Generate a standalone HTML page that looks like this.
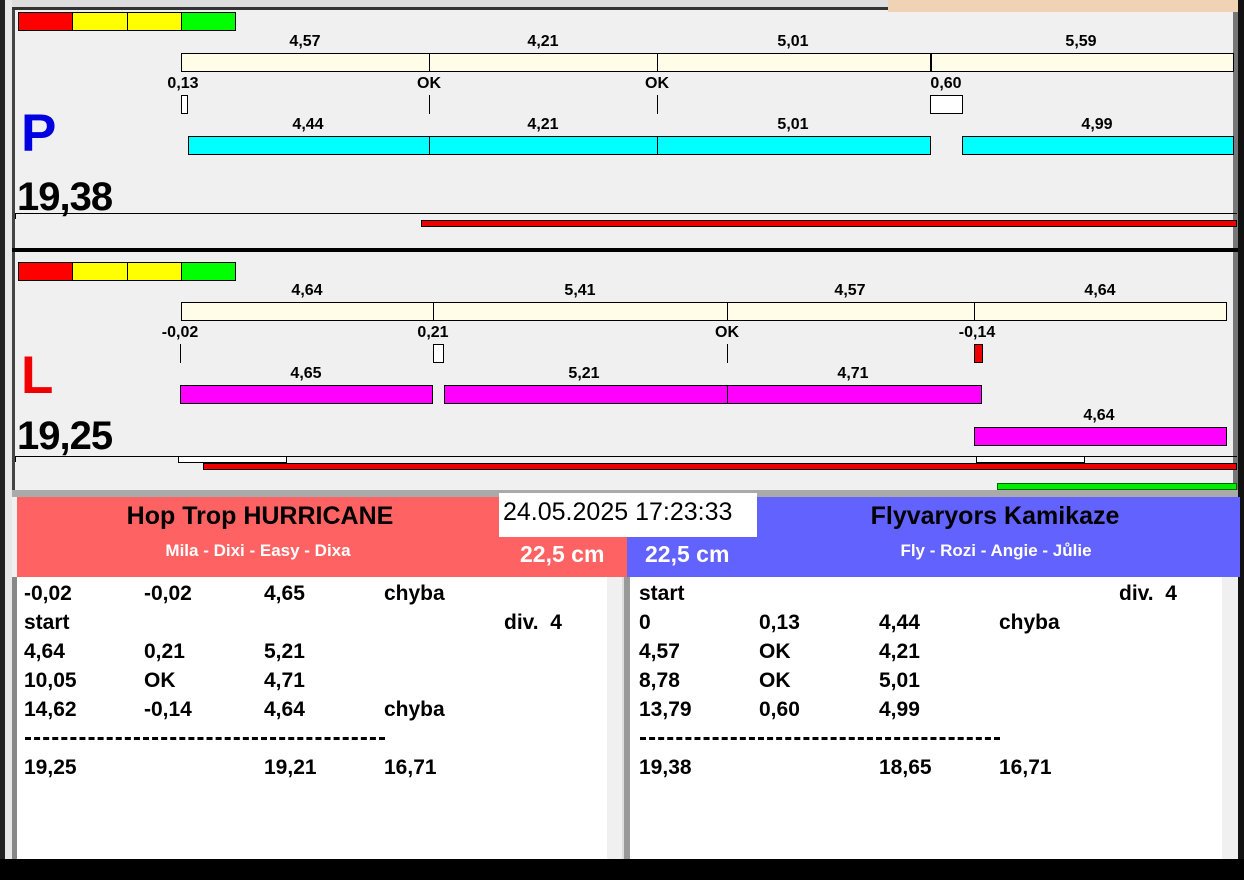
<!DOCTYPE html><html><head><meta charset="utf-8"><style>
*{margin:0;padding:0;box-sizing:border-box}
body{width:1244px;height:880px;position:relative;background:#f0f0f0;font-family:"Liberation Sans",Arial,sans-serif;overflow:hidden}
div{position:absolute}
.b{border:1px solid #000}
.t{font-weight:bold;font-size:16px;transform:translateX(-50%);white-space:nowrap;line-height:18px}
.vl{width:1px;background:#000}
.r{font-weight:bold;font-size:21px;line-height:24px;white-space:nowrap}
</style></head><body>
<div style="left:0;top:0;width:5px;height:880px;background:#222"></div>
<div style="left:5px;top:0;width:7px;height:860px;background:#e8e8e8"></div>
<div style="left:12px;top:0;width:876px;height:10px;background:#ddd;border-bottom:3px solid #333"></div>
<div style="left:888px;top:0;width:352px;height:12px;background:#f0d2b4"></div>
<div style="left:12px;top:10px;width:3px;height:480px;background:#444"></div>
<div style="left:1238px;top:0;width:6px;height:880px;background:#111"></div>
<div style="left:1233px;top:12px;width:5px;height:478px;background:#777"></div>

<!-- panel P -->
<div class="b" style="left:18px;top:12px;width:55px;height:19px;background:#f00"></div>
<div class="b" style="left:72px;top:12px;width:56px;height:19px;background:#ff0"></div>
<div class="b" style="left:127px;top:12px;width:55px;height:19px;background:#ff0"></div>
<div class="b" style="left:181px;top:12px;width:55px;height:19px;background:#0f0"></div>
<div class="t" style="left:305px;top:33px">4,57</div><div class="t" style="left:543px;top:33px">4,21</div><div class="t" style="left:793px;top:33px">5,01</div><div class="t" style="left:1081px;top:33px">5,59</div>
<div class="b" style="left:181px;top:53px;width:1053px;height:19px;background:#fffde8"></div>
<div class="vl" style="left:429px;top:53px;height:19px"></div><div class="vl" style="left:657px;top:53px;height:19px"></div><div class="vl" style="left:930px;top:53px;height:19px;width:2px"></div>
<div class="t" style="left:183px;top:75px">0,13</div><div class="t" style="left:429px;top:75px">OK</div><div class="t" style="left:657px;top:75px">OK</div><div class="t" style="left:946px;top:75px">0,60</div>
<div class="b" style="left:181px;top:95px;width:7px;height:19px;background:#fff"></div>
<div class="vl" style="left:429px;top:95px;height:19px"></div><div class="vl" style="left:657px;top:95px;height:19px"></div>
<div class="b" style="left:930px;top:95px;width:33px;height:19px;background:#fff"></div>
<div class="t" style="left:308px;top:116px">4,44</div><div class="t" style="left:543px;top:116px">4,21</div><div class="t" style="left:793px;top:116px">5,01</div><div class="t" style="left:1097px;top:116px">4,99</div>
<div class="b" style="left:188px;top:136px;width:743px;height:19px;background:#0ff"></div>
<div class="vl" style="left:429px;top:136px;height:19px"></div><div class="vl" style="left:657px;top:136px;height:19px"></div>
<div class="b" style="left:962px;top:136px;width:272px;height:19px;background:#0ff"></div>
<div style="left:21px;top:103px;font-size:53px;font-weight:bold;color:#0000e0;line-height:62px">P</div>
<div style="left:17px;top:173px;font-size:40px;font-weight:bold;line-height:48px;letter-spacing:-1px">19,38</div>
<div style="left:15px;top:213px;width:1222px;height:1px;background:#000"></div>
<div style="left:15px;top:213px;width:1px;height:6px;background:#000"></div>
<div class="b" style="left:421px;top:220px;width:816px;height:7px;background:#e00"></div>
<div style="left:12px;top:248px;width:1226px;height:4px;background:#000"></div>

<!-- panel L -->
<div class="b" style="left:18px;top:262px;width:55px;height:19px;background:#f00"></div>
<div class="b" style="left:72px;top:262px;width:56px;height:19px;background:#ff0"></div>
<div class="b" style="left:127px;top:262px;width:55px;height:19px;background:#ff0"></div>
<div class="b" style="left:181px;top:262px;width:55px;height:19px;background:#0f0"></div>
<div class="t" style="left:307px;top:282px">4,64</div><div class="t" style="left:580px;top:282px">5,41</div><div class="t" style="left:850px;top:282px">4,57</div><div class="t" style="left:1100px;top:282px">4,64</div>
<div class="b" style="left:181px;top:302px;width:1046px;height:19px;background:#fffde8"></div>
<div class="vl" style="left:433px;top:302px;height:19px"></div><div class="vl" style="left:727px;top:302px;height:19px"></div><div class="vl" style="left:974px;top:302px;height:19px"></div>
<div class="t" style="left:180px;top:324px">-0,02</div><div class="t" style="left:433px;top:324px">0,21</div><div class="t" style="left:727px;top:324px">OK</div><div class="t" style="left:977px;top:324px">-0,14</div>
<div class="vl" style="left:180px;top:344px;height:19px"></div>
<div class="b" style="left:433px;top:344px;width:11px;height:19px;background:#fff"></div>
<div class="vl" style="left:727px;top:344px;height:19px"></div>
<div class="b" style="left:974px;top:344px;width:9px;height:19px;background:#e00"></div>
<div class="t" style="left:306px;top:365px">4,65</div><div class="t" style="left:584px;top:365px">5,21</div><div class="t" style="left:853px;top:365px">4,71</div>
<div class="b" style="left:180px;top:385px;width:253px;height:19px;background:#f0f"></div>
<div class="b" style="left:444px;top:385px;width:284px;height:19px;background:#f0f"></div>
<div class="b" style="left:727px;top:385px;width:255px;height:19px;background:#f0f"></div>
<div class="t" style="left:1099px;top:407px">4,64</div>
<div class="b" style="left:974px;top:427px;width:253px;height:19px;background:#f0f"></div>
<div style="left:21px;top:345px;font-size:53px;font-weight:bold;color:#f00000;line-height:62px">L</div>
<div style="left:17px;top:412px;font-size:40px;font-weight:bold;line-height:48px;letter-spacing:-1px">19,25</div>
<div style="left:15px;top:456px;width:1222px;height:1px;background:#000"></div>
<div style="left:15px;top:456px;width:1px;height:6px;background:#000"></div>
<div class="b" style="left:178px;top:456px;width:109px;height:7px;background:#fff"></div>
<div class="b" style="left:976px;top:456px;width:109px;height:7px;background:#fff"></div>
<div class="b" style="left:203px;top:463px;width:1034px;height:7px;background:#e00"></div>
<div style="left:997px;top:483px;width:240px;height:7px;background:#0e0;border:1px solid #060"></div>
<div style="left:12px;top:490px;width:1226px;height:7px;background:#aaa"></div>

<!-- headers -->
<div style="left:17px;top:497px;width:610px;height:80px;background:#ff6262"></div>
<div style="left:627px;top:497px;width:613px;height:80px;background:#6262ff"></div>
<div style="left:260px;top:502px;transform:translateX(-50%);font-size:25px;font-weight:bold;white-space:nowrap">Hop Trop HURRICANE</div>
<div style="left:258px;top:541px;transform:translateX(-50%);font-size:17px;font-weight:bold;color:#fff;white-space:nowrap">Mila - Dixi - Easy - Dixa</div>
<div style="left:520px;top:541px;font-size:23px;font-weight:bold;color:#fff">22,5 cm</div>
<div style="left:499px;top:493px;width:258px;height:44px;background:#fff;font-size:25px;padding:5px 0 0 4px;white-space:nowrap">24.05.2025 17:23:33</div>
<div style="left:645px;top:541px;font-size:23px;font-weight:bold;color:#fff">22,5 cm</div>
<div style="left:995px;top:502px;transform:translateX(-50%);font-size:25px;font-weight:bold;white-space:nowrap">Flyvaryors Kamikaze</div>
<div style="left:996px;top:541px;transform:translateX(-50%);font-size:17px;font-weight:bold;color:#fff;white-space:nowrap">Fly - Rozi - Angie - Jůlie</div>

<!-- lists -->
<div style="left:12px;top:577px;width:5px;height:282px;background:#888"></div>
<div style="left:17px;top:577px;width:590px;height:282px;background:#fff"></div>
<div style="left:607px;top:577px;width:15px;height:282px;background:#f0f0f0"></div>
<div style="left:622px;top:577px;width:8px;height:282px;background:#999;border-left:2px solid #ddd"></div>
<div style="left:630px;top:577px;width:592px;height:282px;background:#fff"></div>
<div style="left:1222px;top:577px;width:16px;height:282px;background:#f0f0f0"></div>
<div style="left:0;top:859px;width:1244px;height:21px;background:#000"></div>

<div class="r" style="left:24px;top:582px">-0,02</div><div class="r" style="left:144px;top:582px">-0,02</div><div class="r" style="left:264px;top:582px">4,65</div><div class="r" style="left:384px;top:582px">chyba</div>
<div class="r" style="left:24px;top:611px">start</div><div class="r" style="left:504px;top:611px">div.&nbsp; 4</div>
<div class="r" style="left:24px;top:640px">4,64</div><div class="r" style="left:144px;top:640px">0,21</div><div class="r" style="left:264px;top:640px">5,21</div>
<div class="r" style="left:24px;top:669px">10,05</div><div class="r" style="left:144px;top:669px">OK</div><div class="r" style="left:264px;top:669px">4,71</div>
<div class="r" style="left:24px;top:698px">14,62</div><div class="r" style="left:144px;top:698px">-0,14</div><div class="r" style="left:264px;top:698px">4,64</div><div class="r" style="left:384px;top:698px">chyba</div>
<div style="left:25px;top:737px;width:360px;border-top:3px dashed #000"></div>
<div class="r" style="left:24px;top:756px">19,25</div><div class="r" style="left:264px;top:756px">19,21</div><div class="r" style="left:384px;top:756px">16,71</div>

<div class="r" style="left:639px;top:582px">start</div><div class="r" style="left:1119px;top:582px">div.&nbsp; 4</div>
<div class="r" style="left:639px;top:611px">0</div><div class="r" style="left:759px;top:611px">0,13</div><div class="r" style="left:879px;top:611px">4,44</div><div class="r" style="left:999px;top:611px">chyba</div>
<div class="r" style="left:639px;top:640px">4,57</div><div class="r" style="left:759px;top:640px">OK</div><div class="r" style="left:879px;top:640px">4,21</div>
<div class="r" style="left:639px;top:669px">8,78</div><div class="r" style="left:759px;top:669px">OK</div><div class="r" style="left:879px;top:669px">5,01</div>
<div class="r" style="left:639px;top:698px">13,79</div><div class="r" style="left:759px;top:698px">0,60</div><div class="r" style="left:879px;top:698px">4,99</div>
<div style="left:640px;top:737px;width:360px;border-top:3px dashed #000"></div>
<div class="r" style="left:639px;top:756px">19,38</div><div class="r" style="left:879px;top:756px">18,65</div><div class="r" style="left:999px;top:756px">16,71</div>
</body></html>
